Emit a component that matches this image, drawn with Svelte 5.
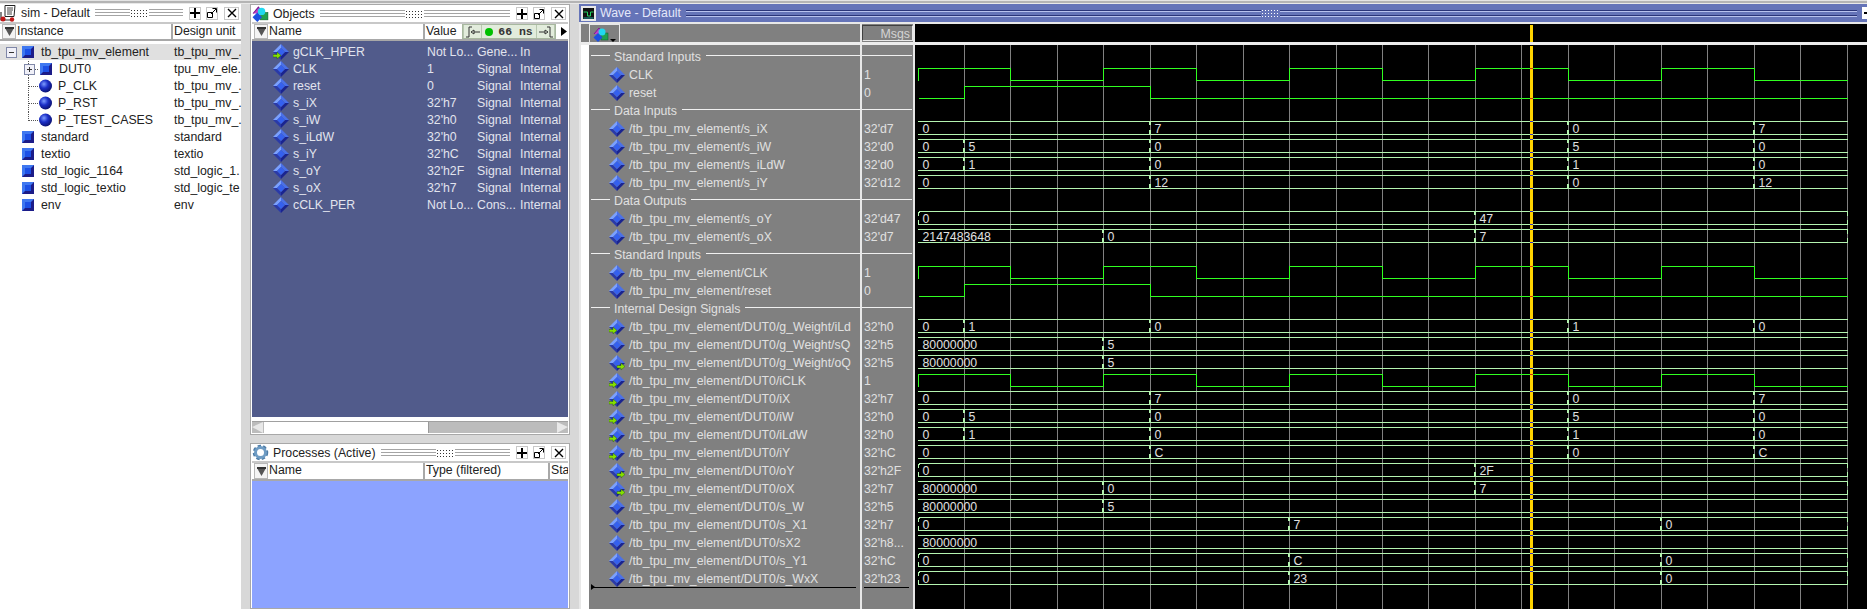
<script>
  // wave grid: 20 half periods from x=918 to x=1847
  const X0 = 918;
  const STEP = 46.45;
  const px = (n) => Math.floor(X0 + STEP * n) + 0.5;
  const steps = Array.from({ length: 20 }, (_, i) => i + 1);

  const swap = (a, b) => [[0, a], [1, b], [5, a], [14, b], [18, a]];
  const data = (v) => [[0, '0'], [5, v], [14, '0'], [18, v]];
  const late = (v) => [[0, '0'], [8, v], [16, '0']];
  const P = 'tb_tpu_mv_element/';
  const D = '/tb_tpu_mv_element/DUT0/';

  const rows = [
    { group: 'Standard Inputs' },
    { name: 'CLK', val: '1', clk: true },
    { name: 'reset', val: '0', rst: true },
    { group: 'Data Inputs' },
    { name: '/' + P + 's_iX', val: "32'd7", bus: data('7') },
    { name: '/' + P + 's_iW', val: "32'd0", bus: swap('0', '5') },
    { name: '/' + P + 's_iLdW', val: "32'd0", bus: swap('0', '1') },
    { name: '/' + P + 's_iY', val: "32'd12", bus: data('12') },
    { group: 'Data Outputs' },
    { name: '/' + P + 's_oY', val: "32'd47", bus: [[0, '0'], [12, '47']], open: true, close: true },
    { name: '/' + P + 's_oX', val: "32'd7", bus: [[0, '2147483648'], [4, '0'], [12, '7']], close: true },
    { group: 'Standard Inputs' },
    { name: '/' + P + 'CLK', val: '1', clk: true },
    { name: '/' + P + 'reset', val: '0', rst: true },
    { group: 'Internal Design Signals' },
    { name: D + 'g_Weight/iLd', val: "32'h0", dir: 'in', bus: swap('0', '1') },
    { name: D + 'g_Weight/sQ', val: "32'h5", bus: [[0, '80000000'], [4, '5']] },
    { name: D + 'g_Weight/oQ', val: "32'h5", dir: 'out', bus: [[0, '80000000'], [4, '5']] },
    { name: D + 'iCLK', val: '1', dir: 'in', clk: true },
    { name: D + 'iX', val: "32'h7", dir: 'in', bus: data('7') },
    { name: D + 'iW', val: "32'h0", dir: 'in', bus: swap('0', '5') },
    { name: D + 'iLdW', val: "32'h0", dir: 'in', bus: swap('0', '1') },
    { name: D + 'iY', val: "32'hC", dir: 'in', bus: data('C') },
    { name: D + 'oY', val: "32'h2F", dir: 'out', bus: [[0, '0'], [12, '2F']], open: true, close: true },
    { name: D + 'oX', val: "32'h7", dir: 'out', bus: [[0, '80000000'], [4, '0'], [12, '7']], close: true },
    { name: D + 's_W', val: "32'h5", bus: [[0, '80000000'], [4, '5']] },
    { name: D + 's_X1', val: "32'h7", bus: late('7'), open: true, close: true },
    { name: D + 'sX2', val: "32'h8...", bus: [[0, '80000000']] },
    { name: D + 's_Y1', val: "32'hC", bus: late('C'), open: true, close: true },
    { name: D + 's_WxX', val: "32'h23", bus: late('23'), open: true, close: true }
  ].map((r, i) => ({ ...r, y: 48 + i * 18 }));

  function clockPath(y) {
    let d = `M${X0 + 0.5},${y + 14.5}V${y + 2.5}`;
    let high = true;
    for (let n = 2; n <= 20; n += 2) {
      d += `H${px(n)}`;
      if (n < 20) {
        high = !high;
        d += `V${y + (high ? 2.5 : 14.5)}`;
      }
    }
    return d;
  }
  const resetPath = (y) =>
    `M${X0 + 1},${y + 14.5}H${px(1)}V${y + 2.5}H${px(5)}V${y + 14.5}H${px(20)}`;

  const instances = [
    { name: 'standard', unit: 'standard' },
    { name: 'textio', unit: 'textio' },
    { name: 'std_logic_1164', unit: 'std_logic_1.' },
    { name: 'std_logic_textio', unit: 'std_logic_te' },
    { name: 'env', unit: 'env' }
  ];
  const procs = [
    { name: 'P_CLK', unit: 'tb_tpu_mv_.' },
    { name: 'P_RST', unit: 'tb_tpu_mv_.' },
    { name: 'P_TEST_CASES', unit: 'tb_tpu_mv_.', last: true }
  ];
  const objects = [
    ['gCLK_HPER', 'Not Lo...', 'Gene...', 'In', 'in'],
    ['CLK', '1', 'Signal', 'Internal'],
    ['reset', '0', 'Signal', 'Internal'],
    ['s_iX', "32'h7", 'Signal', 'Internal'],
    ['s_iW', "32'h0", 'Signal', 'Internal'],
    ['s_iLdW', "32'h0", 'Signal', 'Internal'],
    ['s_iY', "32'hC", 'Signal', 'Internal'],
    ['s_oY', "32'h2F", 'Signal', 'Internal'],
    ['s_oX', "32'h7", 'Signal', 'Internal'],
    ['cCLK_PER', 'Not Lo...', 'Cons...', 'Internal']
  ];
</script>

{#snippet grip()}
  <div class="grip">
    <span class="lines"></span>
    <span class="dots"></span>
    <span class="lines"></span>
  </div>
{/snippet}

{#snippet winButtons()}
  <button class="win" aria-label="Add">
    <svg width="10" height="10" viewBox="0 0 10 10"><path d="M5 0v10M0 5h10" stroke="#000" stroke-width="2" /></svg>
  </button>
  <button class="win" aria-label="Undock">
    <svg width="10" height="10" viewBox="0 0 10 10"><path d="M.5 4.5h5v5h-5zM4 6l5-5M5.5 .5h4v4" fill="none" stroke="#000" /></svg>
  </button>
  <button class="win wide" aria-label="Close">
    <svg width="10" height="10" viewBox="0 0 10 10"><path d="M1 1l8 8M9 1l-8 8" stroke="#000" stroke-width="1.4" /></svg>
  </button>
{/snippet}

{#snippet filter()}
  <button class="filter" aria-label="Filter">
    <svg width="9" height="9" viewBox="0 0 9 9"><path d="M0 1h9L4.500 9z" fill="#555" /><path d="M0 0h9v2H0z" fill="#333" /></svg>
  </button>
{/snippet}

{#snippet square()}
  <svg class="ico" width="12" height="12" viewBox="0 0 12 12">
    <rect width="12" height="12" fill="#1c1c88" />
    <path d="M0 0h12L9 3H3v6L0 12z" fill="#3f78f0" />
    <rect x="3" y="3" width="6" height="6" fill="#1c50e6" />
  </svg>
{/snippet}

{#snippet sphere()}
  <svg class="ico" width="13" height="14" viewBox="0 0 13 14">
    <circle cx="6.500" cy="7" r="6.500" fill="url(#ball)" />
  </svg>
{/snippet}

{#snippet diamond(dir)}
  <svg class="dia" width="16" height="16" viewBox="0 0 16 16">
    <path d="M8 0L0 8h4l4-4z" fill="#7aa0ff" />
    <path d="M8 0l8 8h-4L8 4z" fill="#4a70e8" />
    <path d="M16 8l-8 8v-4l4-4z" fill="#1a2490" />
    <path d="M0 8l8 8v-4L4 8z" fill="#2a3aa8" />
    <path d="M8 4l4 4-4 4-4-4z" fill="#3560ee" />
    {#if dir === 'in'}
      <path d="M0 10.500h4V8l4 3.500L4 15v-2H0z" fill="#86e000" stroke="#1a4a10" stroke-width=".4" />
    {:else if dir === 'out'}
      <path d="M8 10.500h4V8l4 3.500L12 15v-2H8z" fill="#86e000" stroke="#1a4a10" stroke-width=".4" />
    {/if}
  </svg>
{/snippet}

{#snippet shapes(size)}
  <svg width={size} height={size} viewBox="0 0 16 16">
    <path d="M1 8l5-6 5 6" fill="#c040c8" stroke="#7a1a90" />
    <rect x="8" y="7" width="7" height="7" fill="#20a050" stroke="#0a5a28" stroke-width=".5" />
    <circle cx="9" cy="6" r="3.500" fill="#20d8f0" />
    <path d="M5 7l4.500 4.500L5 16 .5 11.500z" fill="#1c50e0" />
  </svg>
{/snippet}

<div class="app">
  <svg class="defs" width="0" height="0">
    <defs>
      <radialGradient id="ball" cx=".38" cy=".35" r=".7">
        <stop offset="0" stop-color="#7d9cff" />
        <stop offset=".45" stop-color="#1c30c8" />
        <stop offset="1" stop-color="#0a0f68" />
      </radialGradient>
    </defs>
  </svg>
  <div class="topstrip"></div>
  <div class="desk">
    <section class="panel sim">
      <header class="title">
        <svg class="title-ico" width="17" height="17" viewBox="0 0 17 17">
          <path d="M5 .5h10l-1 11H5z" fill="#fff" stroke="#222" />
          <path d="M7 3h6M7 5h6M7 7h5M7 9h5" stroke="#444" />
          <path d="M1 7v8h12" fill="none" stroke="#333" stroke-width="1.2" />
          <circle cx="3" cy="14" r="2.500" fill="#c01818" />
          <circle cx="12" cy="14.500" r="2.200" fill="#c01818" />
        </svg>
        <span>sim - Default</span>
        {@render grip()}
        {@render winButtons()}
      </header>
      <div class="heads">
        {@render filter()}
        <span class="head" style="width: 157px">Instance</span>
        <span class="head">Design unit</span>
      </div>
      <div class="tree">
        <div class="node selected">
          <span class="tgl root" aria-hidden="true"></span>
          {@render square()}
          <span class="nm">tb_tpu_mv_element</span>
          <span class="unit">tb_tpu_mv_.</span>
        </div>
        <div class="node">
          <span class="elbow"></span>
          <span class="tgl plus" aria-hidden="true"></span>
          <span class="gap5"></span>
          {@render square()}
          <span class="nm child">DUT0</span>
          <span class="unit">tpu_mv_ele.</span>
        </div>
        {#each procs as p}
          <div class="node">
            <span class="elbow" class:last={p.last}></span>
            <span class="fill"></span>
            {@render sphere()}
            <span class="nm proc">{p.name}</span>
            <span class="unit">{p.unit}</span>
          </div>
        {/each}
        {#each instances as it}
          <div class="node">
            <span class="pad22"></span>
            {@render square()}
            <span class="nm">{it.name}</span>
            <span class="unit">{it.unit}</span>
          </div>
        {/each}
      </div>
    </section>

    <div class="middle">
      <section class="panel objects">
        <header class="title">
          <span class="title-ico">{@render shapes(17)}</span>
          <span>Objects</span>
          {@render grip()}
          {@render winButtons()}
        </header>
        <div class="heads">
          {@render filter()}
          <span class="head" style="width: 157px">Name</span>
          <span class="head value-head">Value</span>
          <div class="now">
            <span class="now-btn">
              <svg width="16" height="12" viewBox="0 0 16 12"><path d="M1 11h3V1h3M9 4l-3 2 3 2zM9 6h6" fill="none" stroke="#333" /></svg>
            </span>
            <span class="now-time"><i></i>66 ns</span>
            <span class="now-btn">
              <svg width="16" height="12" viewBox="0 0 16 12"><path d="M15 11h-3V1H9M7 4l3 2-3 2zM7 6H1" fill="none" stroke="#333" /></svg>
            </span>
          </div>
          <svg class="more" width="6" height="9" viewBox="0 0 6 9"><path d="M0 0l6 4.500L0 9z" fill="#000" /></svg>
        </div>
        <div class="objlist">
          {#each objects as o}
            <div class="obj">
              {@render diamond(o[4])}
              <span class="o-name">{o[0]}</span>
              <span class="o-val">{o[1]}</span>
              <span class="o-kind">{o[2]}</span>
              <span>{o[3]}</span>
            </div>
          {/each}
        </div>
        <div class="hscroll">
          <span class="arrow left"></span>
          <span class="thumb"></span>
          <span class="trough"></span>
          <span class="arrow right"></span>
        </div>
      </section>

      <section class="panel procs">
        <header class="title">
          <svg class="title-ico" width="17" height="17" viewBox="0 0 17 17">
            <circle cx="8.500" cy="8.500" r="6" fill="none" stroke="#4d7ba6" stroke-width="3.500" stroke-dasharray="3 2" />
            <circle cx="8.500" cy="8.500" r="5" fill="none" stroke="#6f9cc4" stroke-width="3" />
          </svg>
          <span>Processes (Active)</span>
          {@render grip()}
          {@render winButtons()}
        </header>
        <div class="heads">
          {@render filter()}
          <span class="head" style="width: 157px">Name</span>
          <span class="head" style="width: 125px">Type (filtered)</span>
          <span class="head clip">Sta</span>
        </div>
        <div class="proclist"></div>
      </section>
    </div>

    <section class="wave">
      <header class="wave-title">
        <svg class="wave-ico" width="15" height="15" viewBox="0 0 15 15">
          <rect x="1" y="1" width="13" height="13" fill="#111" stroke="#e8e8e8" stroke-width="2" />
          <path d="M2.500 6h4v4h3V6h3" fill="none" stroke="#20d060" />
          <path d="M2.500 12h10" stroke="#20a0a0" />
        </svg>
        <span>Wave - Default</span>
        <div class="wave-grip">
          <span class="lines" style="flex: 575 0 0"></span>
          <span class="dots"></span>
          <span class="lines" style="flex: 576 0 0"></span>
        </div>
        <span class="wave-btn"></span>
      </header>
      <div class="wave-body">
        <div class="col names">
          <div class="col-head">
            <button class="add-btn" aria-label="Add wave">
              {@render shapes(16)}
              <svg width="6" height="3" viewBox="0 0 6 3"><path d="M0 0h6L3 3z" fill="#000" /></svg>
            </button>
          </div>
          <div class="col-gap"></div>
          <div class="list names-list">
            {#each rows as r}
              {#if r.group}
                <div class="row group">
                  <span class="rule short"></span>
                  <span class="g-label">{r.group}</span>
                  <span class="rule"></span>
                </div>
              {:else}
                <div class="row">
                  {@render diamond(r.dir)}
                  <span class="s-name">{r.name}</span>
                </div>
              {/if}
            {/each}
            <div class="insert names-insert"><i></i></div>
          </div>
        </div>

        <div class="col vals">
          <div class="col-head">
            <div class="msgs">Msgs</div>
          </div>
          <div class="col-gap"></div>
          <div class="list">
            {#each rows as r}
              {#if r.group}
                <div class="row group"><span class="rule full"></span></div>
              {:else}
                <div class="row val">{r.val}</div>
              {/if}
            {/each}
            <div class="insert vals-insert"></div>
          </div>
        </div>

        <div class="col plot">
          <div class="col-head black"><span class="cursor-top"></span></div>
          <div class="col-gap"></div>
          <svg class="waves" width="952" height="564" viewBox="915 45 952 564">
            {#each steps as n}
              <line class="grid" x1={px(n)} x2={px(n)} y1="45" y2="609" />
            {/each}
            {#each rows as r}
              {#if r.clk}
                <path class="sig" d={clockPath(r.y)} />
              {:else if r.rst}
                <path class="sig" d={resetPath(r.y)} />
              {:else if r.bus}
                <line class="bus" x1={r.open ? X0 + 1 : X0} x2={px(20)} y1={r.y + 1.5} y2={r.y + 1.5} />
                <line class="bus" x1={r.open ? X0 + 1 : X0} x2={px(20)} y1={r.y + 14.5} y2={r.y + 14.5} />
                {#if r.open}
                  <path class="tick" d="M{X0 + 1.5} {r.y + 2}h-1v4M{X0 + 0.5} {r.y + 10}v4h1" />
                {/if}
                {#if r.close}
                  <path class="tick" d="M{px(20)} {r.y + 2}v4M{px(20)} {r.y + 10}v4" />
                {/if}
                {#each r.bus as [n, label]}
                  {#if n > 0}
                    <path class="tick wide" d="M{px(n) - 0.5} {r.y + 1}v4M{px(n) - 0.5} {r.y + 10}v5" />
                  {/if}
                  <text x={Math.floor(X0 + STEP * n) + 4.5} y={r.y + 13}>{label}</text>
                {/each}
              {/if}
            {/each}
            <rect class="cursor" x="1530" y="46" width="3" height="563" />
            {#each rows as r}
              {#if r.clk}
                <rect class="cross-red" x="1530" y={r.y + 2} width="3" height="1" />
              {:else if r.rst}
                <rect class="cross-red" x="1530" y={r.y + 14} width="3" height="1" />
              {:else if r.bus}
                <rect class="cross-blue" x="1530" y={r.y + 1} width="3" height="1" />
                <rect class="cross-blue" x="1530" y={r.y + 14} width="3" height="1" />
              {/if}
            {/each}
          </svg>
        </div>
      </div>
    </section>
  </div>
</div>

<style>
  :global(body) {
    margin: 0;
    background: #d8d8d8;
  }
  .app {
    width: 1867px;
    height: 609px;
    overflow: hidden;
    background: #d8d8d8;
    font-family: 'Liberation Sans', Arial, sans-serif;
    font-size: 12.3px;
    color: #222;
    display: flex;
    flex-direction: column;
  }
  .defs {
    position: absolute;
  }
  .topstrip {
    height: 4px;
    flex: none;
    background: linear-gradient(#e4e4e4 0 1px, #b4b4b4 1px 3px, #e8e8e8 3px);
  }
  .desk {
    flex: 1;
    min-height: 0;
    display: flex;
  }

  /* panels */
  .panel {
    display: flex;
    flex-direction: column;
    background: #fff;
    min-height: 0;
  }
  .sim {
    width: 241px;
    flex: none;
  }
  .middle {
    width: 320px;
    margin-left: 9px;
    margin-right: 9px;
    flex: none;
    display: flex;
    flex-direction: column;
    gap: 8px;
  }
  .objects,
  .procs {
    border: 1px solid #a8a8a8;
    padding: 0 1px;
    margin: 0;
  }
  .objects {
    height: 431px;
    box-sizing: border-box;
    flex: none;
  }
  .procs {
    flex: 1;
  }
  .objects .title,
  .procs .title {
    height: 17px;
  }
  .procs .heads {
    height: 18px;
  }
  .title {
    height: 18px;
    flex: none;
    display: flex;
    align-items: center;
    gap: 4px;
    padding-right: 2px;
    white-space: nowrap;
    border-bottom: 2px solid #c8c8c8;
    background: #fff;
  }
  .title-ico {
    width: 17px;
    height: 17px;
    flex: none;
  }
  .grip {
    flex: 1;
    min-width: 0;
    display: flex;
    align-items: center;
    margin: 0 1px 0 1px;
  }
  .grip .lines {
    flex: 1;
    height: 8px;
    background: repeating-linear-gradient(#a4a4a4 0 1px, #fff 1px 3px);
  }
  .dots {
    width: 19px;
    height: 8px;
    flex: none;
    background-image: radial-gradient(circle, #333 0.7px, transparent 0.8px);
    background-size: 3px 3px;
  }
  .win {
    width: 12px;
    height: 13px;
    flex: none;
    box-sizing: border-box;
    padding: 0;
    margin-left: 1px;
    background: #fff;
    border: 1px solid #c8c8c8;
    display: flex;
    align-items: center;
    justify-content: center;
  }
  .win.wide {
    width: 15px;
    margin-left: 2px;
  }
  .heads {
    height: 17px;
    box-sizing: border-box;
    flex: none;
    display: flex;
    align-items: stretch;
    background: #fff;
    border-bottom: 2px solid #a8a8a8;
    white-space: nowrap;
    overflow: hidden;
  }
  .filter {
    width: 14px;
    flex: none;
    padding: 0;
    margin-left: 2px;
    background: #f4f4f4;
    border: 1px solid #b8b8b8;
    display: flex;
    align-items: center;
    justify-content: center;
  }
  .head {
    flex: none;
    padding-left: 1px;
    border-right: 2px solid #a8a8a8;
    line-height: 15px;
    box-sizing: border-box;
  }
  .head:last-child {
    border-right: 0;
  }
  .clip {
    border: 0;
  }

  /* sim tree */
  .tree {
    padding-top: 3px;
  }
  .node {
    height: 16px;
    margin-bottom: 1px;
    display: flex;
    align-items: center;
    white-space: nowrap;
  }
  .selected {
    background: #e0e0e0;
  }
  .tgl {
    width: 9px;
    height: 9px;
    flex: none;
    border: 1px solid #8088a8;
    background: linear-gradient(#333, #333) center / 5px 1px no-repeat, #f0f0f8;
  }
  .tgl.root {
    margin: 0 5px 0 6px;
  }
  .tgl.plus {
    background:
      linear-gradient(#333, #333) center / 5px 1px no-repeat,
      linear-gradient(#333, #333) center / 1px 5px no-repeat,
      #f0f0f8;
    margin-left: -14px;
  }
  .gap5 {
    width: 5px;
    flex: none;
  }
  .elbow {
    width: 10px;
    height: 17px;
    margin-left: 28px;
    flex: none;
    box-sizing: border-box;
    border-left: 1px dotted #555;
  }
  .elbow::after {
    content: '';
    display: block;
    height: 8px;
    border-bottom: 1px dotted #555;
  }
  .elbow.last {
    height: 9px;
    align-self: flex-start;
  }
  .fill {
    width: 1px;
    flex: none;
  }
  .pad22 {
    width: 22px;
    flex: none;
  }
  .ico {
    flex: none;
  }
  .nm {
    width: 133px;
    margin-left: 7px;
    flex: none;
  }
  .nm.child {
    width: 115px;
  }
  .nm.proc {
    width: 116px;
    margin-left: 6px;
  }
  .unit {
    flex: none;
  }

  /* objects */
  .objlist {
    flex: 1;
    background: #515b8b;
    color: #e2e4ee;
    padding-top: 3px;
  }
  .obj {
    height: 16px;
    margin-bottom: 1px;
    display: flex;
    align-items: center;
    white-space: nowrap;
  }
  .dia {
    flex: none;
  }
  .obj .dia {
    margin-left: 21px;
  }
  .o-name {
    width: 134px;
    margin-left: 4px;
    flex: none;
  }
  .o-val {
    width: 50px;
    flex: none;
  }
  .o-kind {
    width: 43px;
    flex: none;
  }
  .value-head {
    width: 37px;
    border-right: 0;
  }
  .now {
    width: 94px;
    flex: none;
    display: flex;
    background: #e2ecdc;
    border: 1px solid #a8b8a0;
    box-sizing: border-box;
  }
  .now-btn {
    width: 19px;
    flex: none;
    display: flex;
    align-items: center;
    justify-content: center;
    border-left: 1px solid #b8c8b0;
    border-right: 1px solid #b8c8b0;
    box-sizing: border-box;
  }
  .now-time {
    flex: 1;
    display: flex;
    align-items: center;
    justify-content: center;
    gap: 5px;
    font-family: 'Liberation Mono', monospace;
    font-weight: bold;
    font-size: 11.5px;
    white-space: pre;
    color: #333;
  }
  .now-time i {
    width: 8px;
    height: 8px;
    border-radius: 50%;
    background: #00c000;
  }
  .more {
    margin: 3px 0 0 5px;
    flex: none;
  }
  .hscroll {
    height: 12px;
    box-sizing: border-box;
    flex: none;
    display: flex;
    margin-top: 4px;
    margin-bottom: 1px;
    background: #bcbcbc;
    border-top: 1px solid #a0a0a0;
  }
  .arrow {
    width: 0;
    height: 0;
    flex: none;
    border-top: 5px solid transparent;
    border-bottom: 6px solid transparent;
  }
  .arrow.left {
    border-right: 11px solid #e8e8e8;
  }
  .arrow.right {
    border-left: 11px solid #e8e8e8;
  }
  .thumb {
    width: 164px;
    margin-left: 1px;
    flex: none;
    background: #fff;
    border-right: 1px solid #999;
  }
  .trough {
    flex: 1;
  }
  .proclist {
    flex: 1;
    background: #8ca3ff;
  }

  /* wave window */
  .wave {
    flex: 1;
    min-width: 0;
    display: flex;
    flex-direction: column;
  }
  .wave-title {
    height: 18px;
    flex: none;
    display: flex;
    align-items: center;
    background: #6574b8;
    color: #e4e8fa;
    white-space: nowrap;
    padding-left: 2px;
  }
  .wave-ico {
    flex: none;
    margin-right: 4px;
  }
  .wave-grip {
    flex: 1;
    min-width: 0;
    display: flex;
    align-items: center;
    margin-left: 5px;
    margin-right: 5px;
  }
  .wave-grip .lines {
    height: 7px;
    background: linear-gradient(#2a3478 0 1px, #b8c2ee 1px 2px, transparent 2px 5px, #2a3478 5px 6px, #b8c2ee 6px 7px);
  }
  .wave-grip .dots {
    background-image: radial-gradient(circle, #fff 0.7px, transparent 0.8px);
  }
  .wave-btn {
    width: 5px;
    height: 12px;
    flex: none;
    background: linear-gradient(#000, #000) 2px center / 3px 2px no-repeat, #fff;
  }
  .wave-body {
    flex: 1;
    min-height: 0;
    display: flex;
    background: #e8e8e8;
    padding-top: 2px;
    padding-left: 2px;
  }
  .col {
    display: flex;
    flex-direction: column;
    flex: none;
    min-height: 0;
    background: #808080;
    color: #e0e0e0;
  }
  .names {
    width: 279px;
  }
  .vals {
    width: 51px;
    margin-left: 2px;
  }
  .plot {
    width: 952px;
    margin-left: 2px;
    background: #000;
  }
  .col-head {
    height: 18px;
    flex: none;
  }
  .col-head.black {
    background: #000;
  }
  .col-gap {
    height: 3px;
    flex: none;
    background: #ececec;
  }
  .add-btn {
    width: 31px;
    height: 18px;
    margin-left: 8px;
    padding: 1px 0 0 3px;
    background: transparent;
    border: 1px solid #e8e8e8;
    border-bottom: 0;
    box-sizing: border-box;
    display: flex;
    align-items: flex-end;
    gap: 1px;
  }
  .msgs {
    height: 16px;
    margin-top: 1px;
    padding-right: 2px;
    box-sizing: border-box;
    border: 1px solid;
    border-color: #404040 #e8e8e8 #e8e8e8 #404040;
    text-align: right;
    line-height: 17px;
    color: #d4d4d4;
    overflow: hidden;
  }
  .list {
    flex: 1;
    padding-top: 3px;
    min-height: 0;
  }
  .names-list {
    border-left: 8px solid #fff;
  }
  .row {
    height: 18px;
    display: flex;
    align-items: center;
    white-space: nowrap;
  }
  .row .dia {
    margin-left: 20px;
  }
  .s-name {
    margin-left: 4px;
  }
  .val {
    padding-left: 2px;
  }
  .group {
    align-items: flex-start;
  }
  .g-label {
    margin: 2px 5px 0 4px;
  }
  .rule {
    flex: 1;
    height: 1px;
    margin-top: 7px;
    background: #f0f0f0;
  }
  .rule.short {
    flex: none;
    width: 19px;
    margin-left: 2px;
  }
  .rule.full {
    margin-right: 1px;
  }
  .insert {
    height: 1px;
    margin-top: -1px;
    background: #000;
  }
  .names-insert {
    margin-left: 2px;
    margin-right: 4px;
  }
  .names-insert i {
    display: block;
    width: 0;
    height: 0;
    position: relative;
    top: -3px;
    border-left: 4px solid #000;
    border-top: 3px solid transparent;
    border-bottom: 3px solid transparent;
  }
  .vals-insert {
    margin-left: 2px;
    margin-right: 4px;
  }
  .cursor-top {
    display: block;
    width: 3px;
    height: 17px;
    margin-left: 615px;
    position: relative;
    top: 1px;
    background: #ffd400;
  }
  .waves {
    display: block;
    flex: none;
  }
  .grid {
    stroke: #808080;
    shape-rendering: crispEdges;
  }
  .sig {
    fill: none;
    stroke: #30ff20;
    shape-rendering: crispEdges;
  }
  .bus {
    stroke: #b4f4b0;
    shape-rendering: crispEdges;
  }
  .tick {
    fill: none;
    stroke: #b4f4b0;
    shape-rendering: crispEdges;
  }
  .tick.wide {
    stroke-width: 2;
  }
  .waves text {
    fill: #e0e0e0;
    font-family: 'Liberation Sans', Arial, sans-serif;
    font-size: 12.3px;
  }
  .cursor {
    fill: #ffd400;
  }
  .cross-red {
    fill: #d03010;
  }
  .cross-blue {
    fill: #3030c8;
  }
</style>
